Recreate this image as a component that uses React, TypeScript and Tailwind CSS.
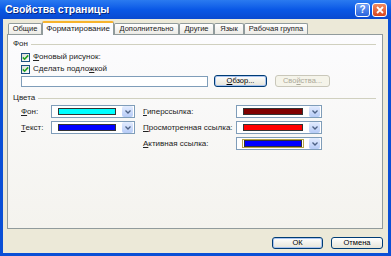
import React from 'react';

const font = "font-['Liberation_Sans','Arial',sans-serif]";

const tabs = [
  { label: 'Общие', w: 'w-[34px]' },
  { label: 'Форматирование', w: 'w-[72px]', active: true },
  { label: 'Дополнительно', w: 'w-[65px]' },
  { label: 'Другие', w: 'w-[35px]' },
  { label: 'Язык', w: 'w-[30px]' },
  { label: 'Рабочая группа', w: 'w-[64px]' },
];

function CheckBox({ label }: { label: React.ReactNode }) {
  return (
    <div className="flex items-center gap-[3px] h-[12px]">
      <div className="w-[9px] h-[9px] border border-[#1c5180] bg-gradient-to-br from-[#dcdcd7] to-white flex items-center justify-center">
        <svg width="7" height="7" viewBox="0 0 7 7">
          <path d="M0.8 3.4 L2.6 5.2 L6.2 1.4" stroke="#21a121" strokeWidth="1.6" fill="none" />
        </svg>
      </div>
      <span>{label}</span>
    </div>
  );
}

function ColorCombo({ color, active }: { color: string; active?: boolean }) {
  return (
    <div className="h-[13px] bg-white border border-[#7f9db9] flex items-center pl-[5px] pr-[1px]">
      <div className={`flex-1 h-[9px] flex items-center px-[1px] ${active ? 'border border-[#b8a648]' : ''}`}>
        <div className="w-full h-[7px] border border-[#333]" style={{ background: color }} />
      </div>
      <div className="ml-[5px] w-[11px] h-[11px] rounded-[2px] bg-gradient-to-b from-[#e3ecfe] to-[#b6cbf6] flex items-center justify-center">
        <svg width="6" height="4" viewBox="0 0 6 4">
          <path d="M0.5 0.5 L3 3 L5.5 0.5" stroke="#4d6185" strokeWidth="1.3" fill="none" />
        </svg>
      </div>
    </div>
  );
}

function XpButton({ children, disabled, focus }: { children: React.ReactNode; disabled?: boolean; focus?: boolean }) {
  return (
    <div
      className={`h-[12px] rounded-[3px] border flex items-center justify-center text-[7.5px] ${
        disabled
          ? 'border-[#c9c7ba] bg-[#f5f4ea] text-[#aca899]'
          : `border-[#003c74] bg-gradient-to-b from-white to-[#e6e4d8] text-black ${focus ? 'shadow-[inset_0_0_0_1px_#a9c3f0]' : ''}`
      }`}
    >
      {children}
    </div>
  );
}

export default function App() {
  return (
    <div className={`w-[391px] h-[256px] bg-[#0a4fd6] flex flex-col ${font} text-[8px] text-[#222] whitespace-nowrap`}>
      <div className="h-[19px] shrink-0 bg-gradient-to-b from-[#2a7af0] via-[#0a58e6] to-[#0a4ad0] flex items-center pl-[5px] pr-[4px]">
        <span className="text-white font-bold text-[10.5px] [text-shadow:1px_1px_0_#0a2a80]">Свойства страницы</span>
        <div className="ml-auto flex gap-[2px]">
          <div className="w-[15px] h-[14px] rounded-[3px] border border-white bg-gradient-to-b from-[#6f9ff6] to-[#2a63dc] text-white font-bold text-[10px] flex items-center justify-center">
            ?
          </div>
          <div className="w-[15px] h-[14px] rounded-[3px] border border-white bg-gradient-to-b from-[#f08a60] to-[#d9441c] flex items-center justify-center">
            <svg width="8" height="8" viewBox="0 0 8 8">
              <path d="M1 1 L7 7 M7 1 L1 7" stroke="white" strokeWidth="1.8" />
            </svg>
          </div>
        </div>
      </div>

      <div className="flex-1 mx-[3px] mb-[3px] bg-[#ece9d8] flex flex-col">
        <div className="h-[15px] shrink-0 flex items-end pl-[5px]">
          {tabs.map((t) =>
            t.active ? (
              <div
                key={t.label}
                className={`${t.w} h-[14px] -mb-px relative z-10 bg-[#fcfcfe] border border-b-0 border-[#919b9c] border-t-2 border-t-[#f7b32c] rounded-t-[2px] flex items-center justify-center`}
              >
                {t.label}
              </div>
            ) : (
              <div
                key={t.label}
                className={`${t.w} h-[11px] bg-gradient-to-b from-white to-[#ecebe6] border border-b-0 border-[#919b9c] rounded-t-[2px] flex items-center justify-center text-[7.5px]`}
              >
                {t.label}
              </div>
            )
          )}
        </div>

        <div className="ml-[4px] mr-[5px] h-[195px] shrink-0 border border-[#919b9c] bg-gradient-to-b from-[#fcfcfe] to-[#f4f3ee] pt-[3px] pl-[5px] pr-[6px] flex flex-col">
          <div className="flex items-center gap-[3px] h-[12px]">
            <span>Фон</span>
            <div className="flex-1 h-px bg-[#d0d0bf]" />
          </div>
          <div className="pl-[8px] pt-[1px] flex flex-col">
            <CheckBox label={<><u>Ф</u>оновый рисунок:</>} />
            <CheckBox label={<>Сделать подло<u>ж</u>кой</>} />
            <div className="flex items-center h-[12px]">
              <div className="w-[187px] h-[11px] bg-white border border-[#7f9db9]" />
              <div className="w-[53px] ml-[6px]">
                <XpButton focus><u>О</u>бзор...</XpButton>
              </div>
              <div className="w-[55px] ml-[8px]">
                <XpButton disabled>Сво<u>й</u>ства...</XpButton>
              </div>
            </div>
          </div>

          <div className="flex items-center gap-[3px] h-[12px] mt-[5px]">
            <span>Цвета</span>
            <div className="flex-1 h-px bg-[#d0d0bf]" />
          </div>

          <div className="pl-[8px] mt-[1px] grid grid-cols-[30px_84px_8px_93px_86px] gap-y-[3px] items-center">
            <span><u>Ф</u>он:</span>
            <ColorCombo color="#00ffff" />
            <span />
            <span><u>Г</u>иперссылка:</span>
            <ColorCombo color="#800000" />

            <span><u>Т</u>екст:</span>
            <ColorCombo color="#0000ff" />
            <span />
            <span><u>П</u>росмотренная ссылка:</span>
            <ColorCombo color="#ff0000" />

            <span />
            <span />
            <span />
            <span><u>А</u>ктивная ссылка:</span>
            <ColorCombo color="#0000ff" active />
          </div>
        </div>

        <div className="flex-1 flex justify-end items-start pt-[8px] pr-[5px] gap-[8px]">
          <div className="w-[51px]">
            <XpButton focus>ОК</XpButton>
          </div>
          <div className="w-[52px]">
            <XpButton>Отмена</XpButton>
          </div>
        </div>
      </div>
    </div>
  );
}
